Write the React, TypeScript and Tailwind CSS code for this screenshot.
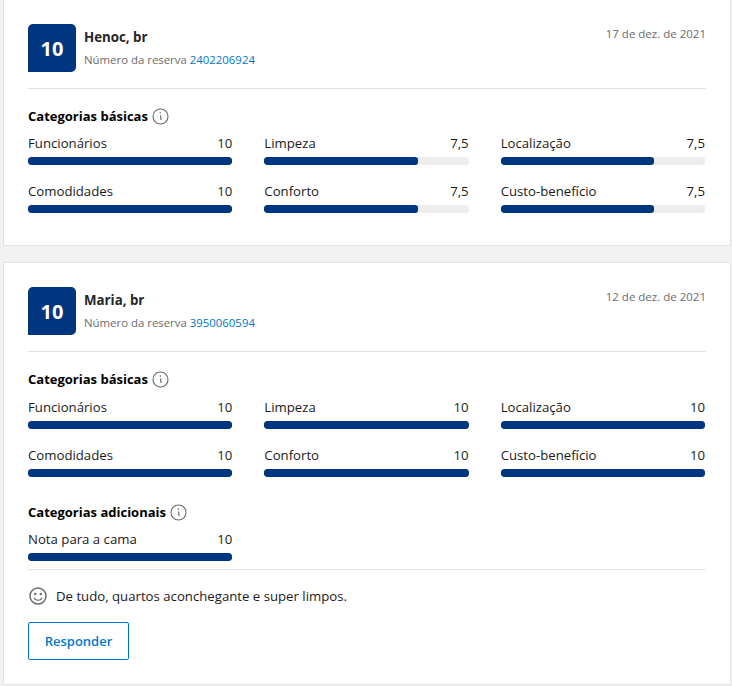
const sans = "font-['Open_Sans','Noto_Sans',sans-serif]"

const InfoIcon = () => (
    <svg width="17" height="17" viewBox="0 0 17 17" fill="none" className="shrink-0">
        <circle cx="8.5" cy="8.5" r="7.5" stroke="#6b6b6b" strokeWidth="1.1" />
        <path d="M8.6 7.4 9 12" stroke="#6b6b6b" strokeWidth="1.2" />
        <circle cx="8.3" cy="5" r="0.8" fill="#6b6b6b" />
    </svg>
)

const Smile = () => (
    <svg width="18" height="18" viewBox="0 0 18 18" fill="none" className="shrink-0">
        <circle cx="9" cy="9" r="8" stroke="#6b6b6b" strokeWidth="1.5" />
        <circle cx="6.2" cy="7" r="1.2" fill="#6b6b6b" />
        <circle cx="11.8" cy="7" r="1.2" fill="#6b6b6b" />
        <path d="M5 10.8c1 1.7 2.4 2.5 4 2.5s3-.8 4-2.5" stroke="#6b6b6b" strokeWidth="1.3" />
    </svg>
)

const Bar = ({ label, score }: { label: string; score: string }) => (
    <div>
        <div className="flex h-[18px] items-center justify-between text-[13.2px] text-[#1a1a1a]">
            <span>{label}</span>
            <span>{score}</span>
        </div>
        <div className="mt-1 h-2 overflow-hidden rounded-[3px] bg-[#ededed]">
            {score === "10" ? (
                <div className="h-full w-full rounded-[3px] bg-[#003580]" />
            ) : (
                <div className="h-full w-3/4 rounded-[3px] bg-[#003580]" />
            )}
        </div>
    </div>
)

const Title = ({ children }: { children: string }) => (
    <div className="flex h-[18px] items-center gap-1 text-[13px] font-bold text-black">
        <span className="pt-0.5">{children}</span>
        <InfoIcon />
    </div>
)

const Review = ({ name, number, date, scores, second }: { name: string; number: string; date: string; scores: string[]; second?: boolean }) => {
    const labels = ["Funcionários", "Limpeza", "Localização", "Comodidades", "Conforto", "Custo-benefício"]
    return (
        <>
            <div className="flex h-[65px] justify-between border-b border-[#e3e3e3] pb-4">
                <div className="flex gap-2">
                    <div className="flex h-12 w-12 items-center justify-center rounded-[5px] rounded-bl-none bg-[#003580] pt-0.5 text-xl font-bold text-white">10</div>
                    <div>
                        <div className="mt-1 h-[18px] text-[13.3px] leading-[18px] font-bold text-[#262626]">{name}</div>
                        <div className="mt-1.5 flex items-center gap-[3px] leading-[16px]">
                            <span className="text-[11.4px] font-medium text-[#6b6b6b]">Número da reserva</span>
                            <span className="text-[11.4px] text-[#0077cc]">{number}</span>
                        </div>
                    </div>
                </div>
                <div className="mt-0.5 text-[11.5px] leading-[16px] text-[#6b6b6b]">{date}</div>
            </div>
            <div className="mt-[18px]"><Title>Categorias básicas</Title></div>
            <div className={`${second ? "mt-[11px]" : "mt-2.5"} mr-px grid grid-cols-3 gap-x-8 gap-y-[18px]`}>
                {labels.map((l, i) => <Bar key={l} label={l} score={scores[i]} />)}
            </div>
        </>
    )
}

export default function App() {
    return (
        <div className={`${sans} flex h-[686px] flex-col gap-4 overflow-hidden bg-[#f2f2f2] pr-px pl-[3px]`}>
            <div className="h-[246px] shrink-0 border border-t-0 border-[#e3e3e3] bg-white px-6 pt-6">
                <Review name="Henoc, br" number="2402206924" date="17 de dez. de 2021" scores={["10", "7,5", "7,5", "10", "7,5", "7,5"]} />
            </div>
            <div className="h-[423px] shrink-0 border border-[#e3e3e3] bg-white px-6 pt-6">
                <Review second name="Maria, br" number="3950060594" date="12 de dez. de 2021" scores={["10", "10", "10", "10", "10", "10"]} />
                <div className="mt-[26px]"><Title>Categorias adicionais</Title></div>
                <div className="mt-2.5 mr-px grid grid-cols-3 gap-x-8">
                    <Bar label="Nota para a cama" score="10" />
                </div>
                <div className="mt-2 border-t border-[#e3e3e3] pt-[17px]">
                    <div className="flex h-[18px] items-center gap-[9px] pl-px text-[13.2px] text-[#1a1a1a]">
                        <Smile />
                        <span className="pt-0.5">De tudo, quartos aconchegante e super limpos.</span>
                    </div>
                </div>
                <button className="mt-[17px] h-[38px] w-[101px] rounded-[2px] border border-[#0077cc] pt-0.5 text-[13px] font-semibold text-[#0077cc]">Responder</button>
            </div>
        </div>
    )
}
